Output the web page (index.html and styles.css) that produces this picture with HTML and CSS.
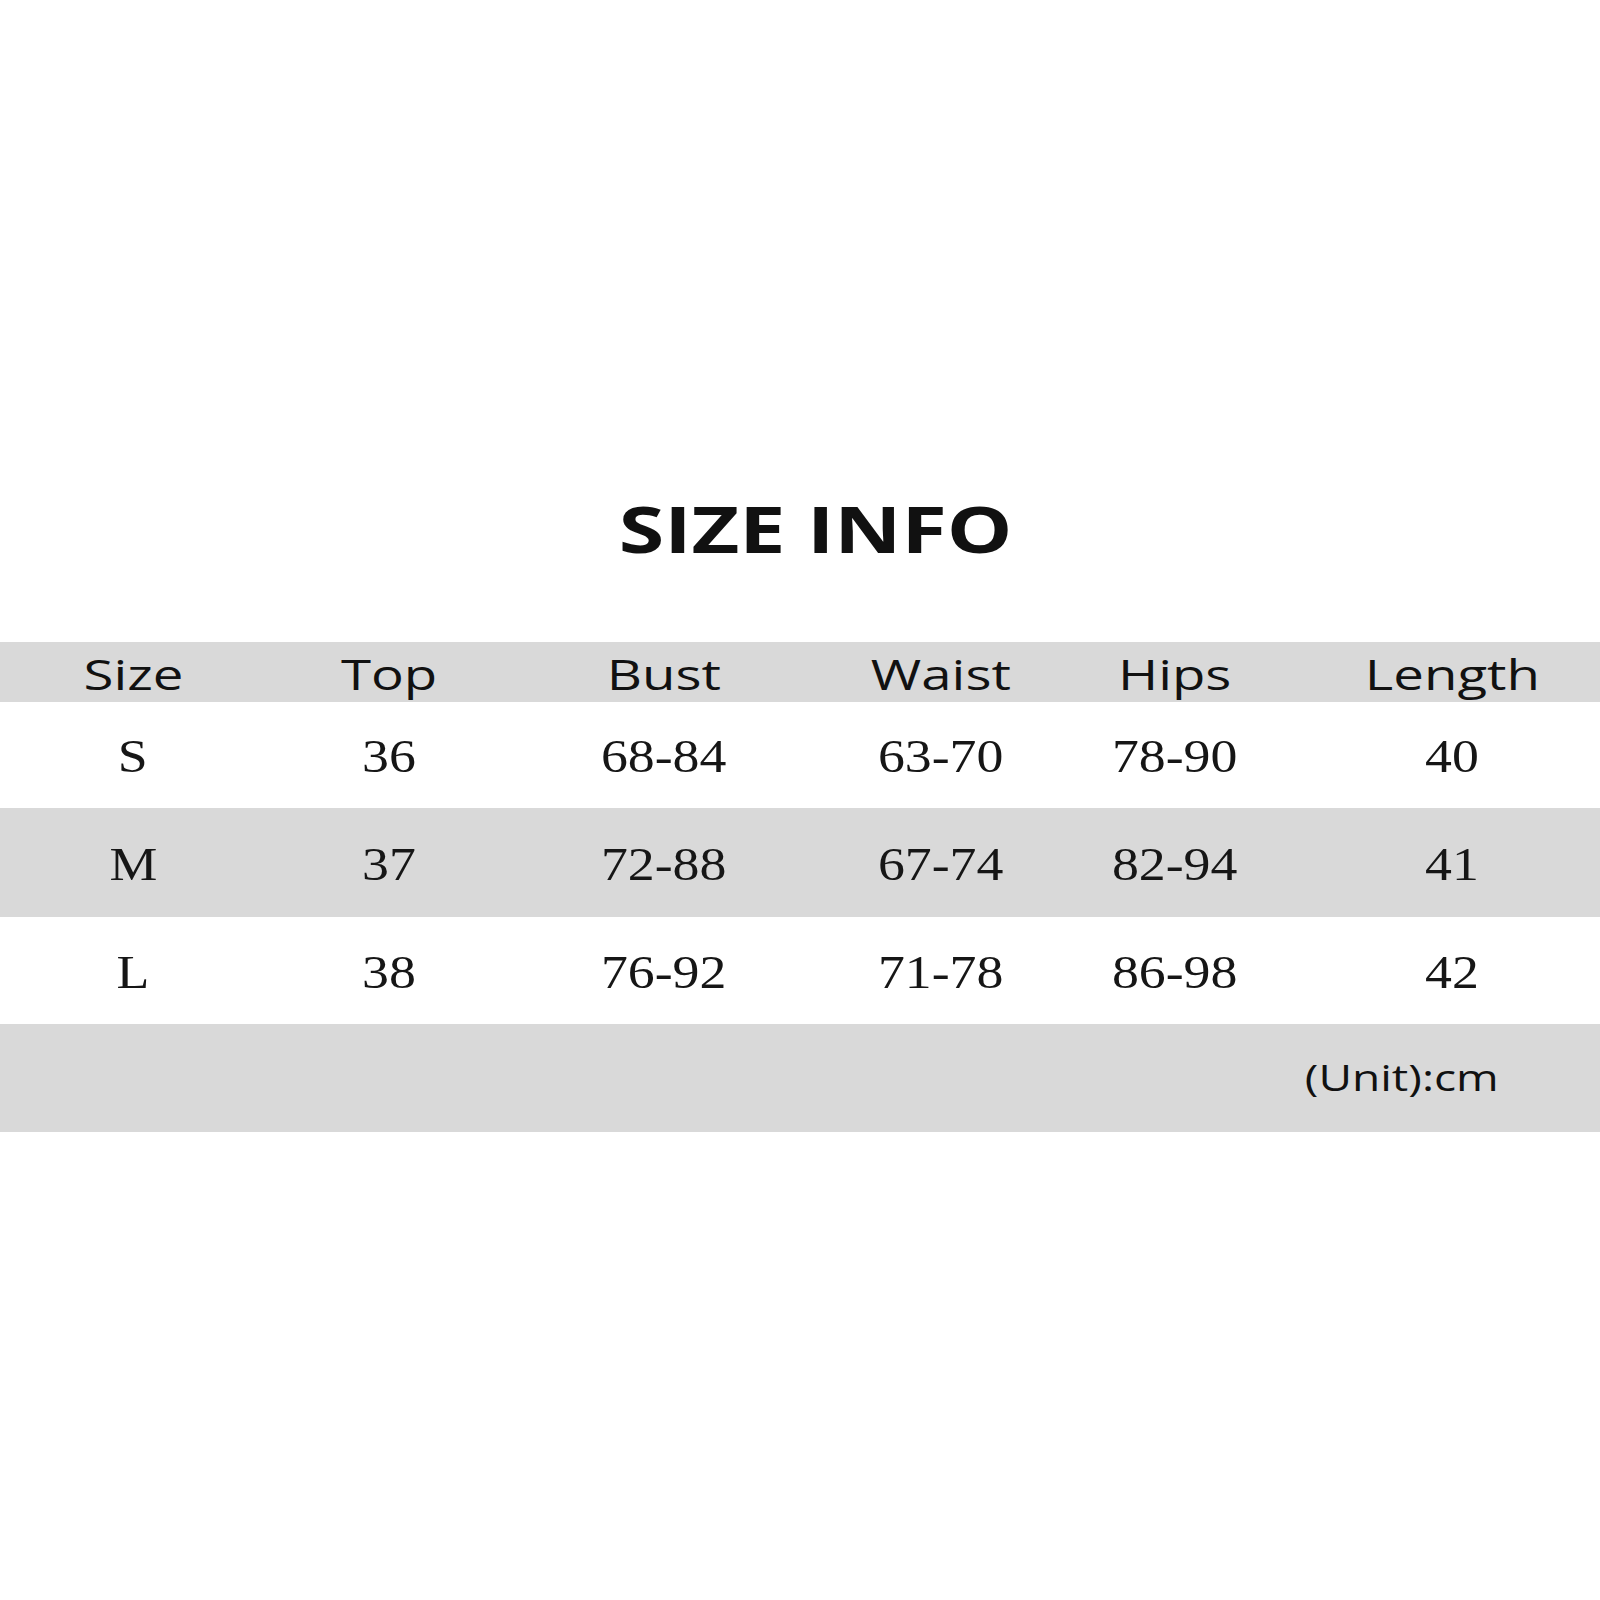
FILE: index.html
```html
<!DOCTYPE html>
<html lang="en">
<head>
<meta charset="utf-8">
<title>Size Info</title>
<link rel="stylesheet" href="styles.css">
</head>
<body>
<main class="page">
  <h1 class="title"><span class="title-text">SIZE INFO</span></h1>
  <section class="chart">
    <div class="row row-head">
      <div class="cell"><span class="head">Size</span></div>
      <div class="cell"><span class="head">Top</span></div>
      <div class="cell"><span class="head">Bust</span></div>
      <div class="cell"><span class="head">Waist</span></div>
      <div class="cell"><span class="head">Hips</span></div>
      <div class="cell cell-last"><span class="head">Length</span></div>
    </div>
    <div class="row row-s">
      <div class="cell"><span class="val">S</span></div>
      <div class="cell"><span class="val">36</span></div>
      <div class="cell"><span class="val">68-84</span></div>
      <div class="cell"><span class="val">63-70</span></div>
      <div class="cell"><span class="val">78-90</span></div>
      <div class="cell cell-last"><span class="val">40</span></div>
    </div>
    <div class="row row-m">
      <div class="cell"><span class="val">M</span></div>
      <div class="cell"><span class="val">37</span></div>
      <div class="cell"><span class="val">72-88</span></div>
      <div class="cell"><span class="val">67-74</span></div>
      <div class="cell"><span class="val">82-94</span></div>
      <div class="cell cell-last"><span class="val">41</span></div>
    </div>
    <div class="row row-l">
      <div class="cell"><span class="val">L</span></div>
      <div class="cell"><span class="val">38</span></div>
      <div class="cell"><span class="val">76-92</span></div>
      <div class="cell"><span class="val">71-78</span></div>
      <div class="cell"><span class="val">86-98</span></div>
      <div class="cell cell-last"><span class="val">42</span></div>
    </div>
    <div class="foot">
      <span class="unit">(Unit):cm</span>
    </div>
  </section>
</main>
</body>
</html>
```
FILE: styles.css
```css
html, body {
  margin: 0;
  padding: 0;
  background: #ffffff;
}

.page {
  width: 1600px;
  height: 1600px;
  padding-top: 497px;
  box-sizing: border-box;
  color: #111111;
}

.title {
  margin: 0;
  padding-left: 31px;
  text-align: center;
  font-family: "Open Sans", "DejaVu Sans", sans-serif;
  font-weight: 700;
  font-size: 64px;
  line-height: 64px;
}

.title-text {
  display: inline-block;
  transform: scaleX(1.29);
}

.chart {
  margin-top: 81px;
  display: flex;
  flex-direction: column;
}

.row {
  display: grid;
  grid-template-columns: 266px 246px 304px 250px 218px 1fr;
}

.row-head {
  height: 60px;
  background: #d9d9d9;
}

.row-s {
  height: 106px;
  background: #ffffff;
}

.row-m {
  height: 109px;
  background: #d9d9d9;
}

.row-l {
  height: 107px;
  background: #ffffff;
}

.cell {
  display: flex;
  align-items: center;
  justify-content: center;
}

.cell-last {
  padding-left: 20px;
}

.head {
  display: inline-block;
  font-family: "Open Sans", "DejaVu Sans", sans-serif;
  font-size: 42px;
  line-height: 42px;
  padding-top: 3px;
  transform: scaleX(1.3);
  color: #111111;
}

.val {
  display: inline-block;
  font-family: "Liberation Serif", "Times New Roman", serif;
  font-size: 46px;
  line-height: 46px;
  padding-top: 4px;
  transform: scaleX(1.17);
  color: #161616;
}

.foot {
  height: 108px;
  background: #d9d9d9;
  display: flex;
  align-items: center;
  justify-content: flex-end;
  padding-right: 122px;
}

.unit {
  display: inline-block;
  font-family: "Open Sans", "DejaVu Sans", sans-serif;
  font-size: 36px;
  line-height: 36px;
  transform: scaleX(1.28);
  color: #111111;
}
```
